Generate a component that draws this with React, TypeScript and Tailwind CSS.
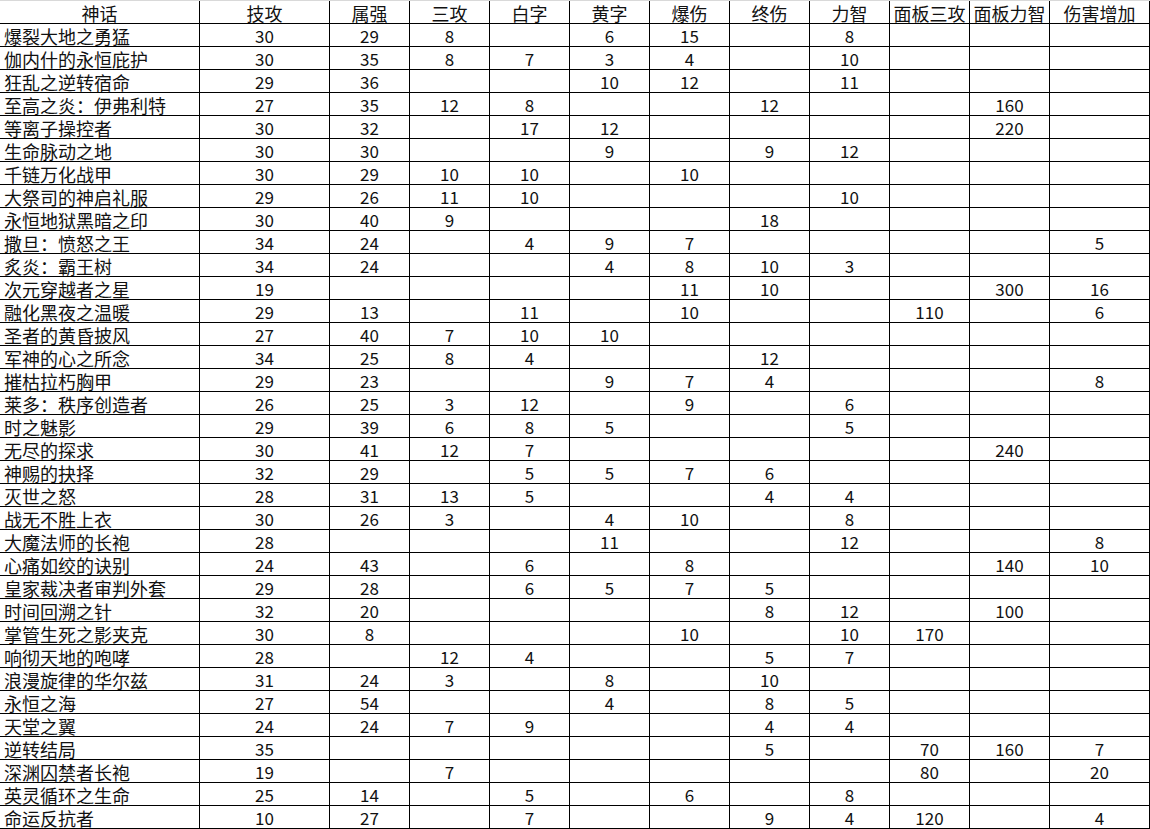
const headers = ["神话", "技攻", "属强", "三攻", "白字", "黄字", "爆伤", "终伤", "力智", "面板三攻", "面板力智", "伤害增加"];

// name, 技攻, 属强, 三攻, 白字, 黄字, 爆伤, 终伤, 力智, 面板三攻, 面板力智, 伤害增加
const rows: string[][] = [
  ["爆裂大地之勇猛", "30", "29", "8", "", "6", "15", "", "8", "", "", ""],
  ["伽内什的永恒庇护", "30", "35", "8", "7", "3", "4", "", "10", "", "", ""],
  ["狂乱之逆转宿命", "29", "36", "", "", "10", "12", "", "11", "", "", ""],
  ["至高之炎：伊弗利特", "27", "35", "12", "8", "", "", "12", "", "", "160", ""],
  ["等离子操控者", "30", "32", "", "17", "12", "", "", "", "", "220", ""],
  ["生命脉动之地", "30", "30", "", "", "9", "", "9", "12", "", "", ""],
  ["千链万化战甲", "30", "29", "10", "10", "", "10", "", "", "", "", ""],
  ["大祭司的神启礼服", "29", "26", "11", "10", "", "", "", "10", "", "", ""],
  ["永恒地狱黑暗之印", "30", "40", "9", "", "", "", "18", "", "", "", ""],
  ["撒旦：愤怒之王", "34", "24", "", "4", "9", "7", "", "", "", "", "5"],
  ["炙炎：霸王树", "34", "24", "", "", "4", "8", "10", "3", "", "", ""],
  ["次元穿越者之星", "19", "", "", "", "", "11", "10", "", "", "300", "16"],
  ["融化黑夜之温暖", "29", "13", "", "11", "", "10", "", "", "110", "", "6"],
  ["圣者的黄昏披风", "27", "40", "7", "10", "10", "", "", "", "", "", ""],
  ["军神的心之所念", "34", "25", "8", "4", "", "", "12", "", "", "", ""],
  ["摧枯拉朽胸甲", "29", "23", "", "", "9", "7", "4", "", "", "", "8"],
  ["莱多：秩序创造者", "26", "25", "3", "12", "", "9", "", "6", "", "", ""],
  ["时之魅影", "29", "39", "6", "8", "5", "", "", "5", "", "", ""],
  ["无尽的探求", "30", "41", "12", "7", "", "", "", "", "", "240", ""],
  ["神赐的抉择", "32", "29", "", "5", "5", "7", "6", "", "", "", ""],
  ["灭世之怒", "28", "31", "13", "5", "", "", "4", "4", "", "", ""],
  ["战无不胜上衣", "30", "26", "3", "", "4", "10", "", "8", "", "", ""],
  ["大魔法师的长袍", "28", "", "", "", "11", "", "", "12", "", "", "8"],
  ["心痛如绞的诀别", "24", "43", "", "6", "", "8", "", "", "", "140", "10"],
  ["皇家裁决者审判外套", "29", "28", "", "6", "5", "7", "5", "", "", "", ""],
  ["时间回溯之针", "32", "20", "", "", "", "", "8", "12", "", "100", ""],
  ["掌管生死之影夹克", "30", "8", "", "", "", "10", "", "10", "170", "", ""],
  ["响彻天地的咆哮", "28", "", "12", "4", "", "", "5", "7", "", "", ""],
  ["浪漫旋律的华尔兹", "31", "24", "3", "", "8", "", "10", "", "", "", ""],
  ["永恒之海", "27", "54", "", "", "4", "", "8", "5", "", "", ""],
  ["天堂之翼", "24", "24", "7", "9", "", "", "4", "4", "", "", ""],
  ["逆转结局", "35", "", "", "", "", "", "5", "", "70", "160", "7"],
  ["深渊囚禁者长袍", "19", "", "7", "", "", "", "", "", "80", "", "20"],
  ["英灵循环之生命", "25", "14", "", "5", "", "6", "", "8", "", "", ""],
  ["命运反抗者", "10", "27", "", "7", "", "", "9", "4", "120", "", "4"],
];

const font = { fontFamily: '"Noto Sans CJK SC", "Noto Sans", sans-serif' };

function Cell({ text, col, header }: { text: string; col: number; header?: boolean }) {
  const first = col === 0 && !header;
  return (
    <div
      className={`min-w-0 min-h-0 border-r border-b border-black flex items-center whitespace-nowrap leading-[20px] text-[#111] ${
        first ? "justify-start pl-[4px]" : "justify-center"
      } ${col > 0 && !header ? "text-[17px]" : "text-[18px]"}`}
    >
      <span className="pt-[1px]">{text}</span>
    </div>
  );
}

export default function App() {
  return (
    <div
      className="w-[1150px] h-[829px] bg-white overflow-hidden border-t border-[#d9d9d9] grid grid-cols-[200px_130px_80px_80px_80px_80px_80px_80px_80px_80px_80px_100px] grid-rows-[repeat(36,minmax(0,1fr))]"
      style={font}
    >
      {headers.map((h, i) => (
        <Cell key={"h" + i} text={h} col={i} header />
      ))}
      {rows.map((r, ri) =>
        r.map((c, ci) => <Cell key={ri + "-" + ci} text={c} col={ci} />)
      )}
    </div>
  );
}
